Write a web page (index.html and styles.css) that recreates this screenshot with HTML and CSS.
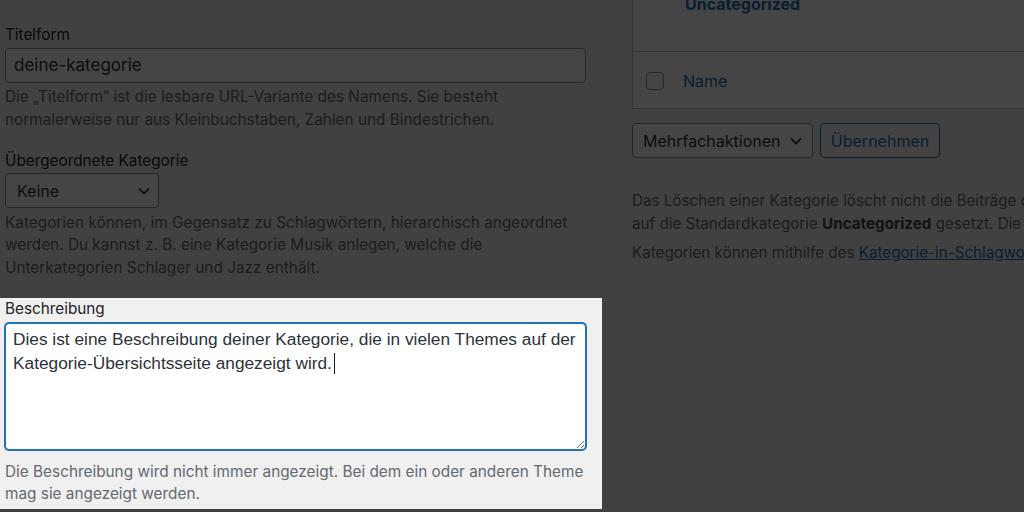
FILE: index.html
```html
<!DOCTYPE html>
<html lang="de">
<head>
<meta charset="utf-8">
<title>Kategorie bearbeiten</title>
<link rel="stylesheet" href="styles.css">
</head>
<body>
<div class="page">
  <div class="col-left">
    <div class="field field-top">
      <p class="desc">Der Name wird auf deiner Website immer so angezeigt.</p>
    </div>
    <div class="field">
      <label class="label">Titelform</label>
      <div class="input">deine-kategorie</div>
      <p class="desc">Die „Titelform“ ist die lesbare URL-Variante des Namens. Sie besteht<br>normalerweise nur aus Kleinbuchstaben, Zahlen und Bindestrichen.</p>
    </div>
    <div class="field">
      <label class="label">Übergeordnete Kategorie</label>
      <div class="select select-parent">
        <span>Keine</span>
        <svg class="chev" width="12" height="8" viewBox="0 0 12 8"><polyline points="1,1.5 6,6.5 11,1.5" fill="none" stroke="#1d2327" stroke-width="1.7"/></svg>
      </div>
      <p class="desc">Kategorien können, im Gegensatz zu Schlagwörtern, hierarchisch angeordnet<br>werden. Du kannst z. B. eine Kategorie Musik anlegen, welche die<br>Unterkategorien Schlager und Jazz enthält.</p>
    </div>
    <div class="field field-highlight">
      <label class="label">Beschreibung</label>
      <div class="textarea">Dies ist eine Beschreibung deiner Kategorie, die in vielen Themes auf der<br>Kategorie-Übersichtsseite angezeigt wird.<span class="caret"></span></div>
      <p class="desc desc-after-textarea">Die Beschreibung wird nicht immer angezeigt. Bei dem ein oder anderen Theme<br>mag sie angezeigt werden.</p>
    </div>
  </div>
  <div class="col-right">
    <div class="table">
      <div class="row row-cat"><a class="cat-link">Uncategorized</a></div>
      <div class="row row-foot"><span class="checkbox"></span><a class="col-name">Name</a></div>
    </div>
    <div class="bulk">
      <div class="select select-bulk">
        <span>Mehrfachaktionen</span>
        <svg class="chev" width="12" height="8" viewBox="0 0 12 8"><polyline points="1,1.5 6,6.5 11,1.5" fill="none" stroke="#1d2327" stroke-width="1.7"/></svg>
      </div>
      <div class="button">Übernehmen</div>
    </div>
    <div class="notes">
      <p>Das Löschen einer Kategorie löscht nicht die Beiträge dieser Kategorie. Stattdessen werden Beiträge, die nur der gelöschten Kategorie zugeordnet waren,<br>auf die Standardkategorie <strong>Uncategorized</strong> gesetzt. Die Standardkategorie kann nicht gelöscht werden.</p>
      <p class="note-2">Kategorien können mithilfe des <a class="link">Kategorie-in-Schlagwort-Konverters</a> selektiv in Schlagwörter umgewandelt werden.</p>
    </div>
  </div>
</div>
</body>
</html>
```
FILE: styles.css
```css
* { box-sizing: border-box; }
html, body { margin: 0; padding: 0; height: 100%; overflow: hidden; }
body {
  background: #f0f0f1;
  color: #3c434a;
  font-family: Inter, "Noto Sans", "Liberation Sans", sans-serif;
  font-size: 15px;
}
.page {
  display: flex;
  gap: 30px;
  margin-top: -17px;
  width: 1700px;
}
.col-left { width: 602px; flex: none; display: flex; flex-direction: column; gap: 18.5px; }
.col-right { width: 1060px; flex: none; }

.field { padding: 0 16px 0 5px; }
.field-top { margin-top: -2px; margin-bottom: 2px; }
.label {
  display: block;
  font-size: 15.3px;
  line-height: 22px;
  color: #1d2327;
}
.desc {
  margin: 3.5px 0 0;
  font-size: 15.35px;
  line-height: 22.5px;
  color: #646970;
  white-space: nowrap;
}
.field-top .desc { margin-top: 0; }

.input {
  margin-top: 1.5px;
  height: 35px;
  border: 1px solid #8c8f94;
  border-radius: 4px;
  background: #fff;
  padding: 0 8px;
  display: flex;
  align-items: center;
  font-size: 17px;
  color: #2c3338;
}
.select {
  margin-top: 1.5px;
  height: 35px;
  border: 1px solid #8c8f94;
  border-radius: 4px;
  background: #fff;
  display: flex;
  align-items: center;
  justify-content: space-between;
  font-size: 16px;
  color: #2c3338;
}
.select-parent { width: 154px; padding: 0 8px 0 11px; }
.chev { display: block; }

.field-highlight {
  position: relative;
  z-index: 2;
  background: #f0f0f1;
  padding-bottom: 3px;
  box-shadow: 0 0 0 3000px rgba(0, 0, 0, 0.73);
}
.textarea {
  margin-top: 3px;
  height: 127px;
  border: 1px solid #2271b1;
  box-shadow: 0 0 0 1px #2271b1;
  border-radius: 4px;
  background: #fff;
  padding: 3px 7px;
  font-family: "Liberation Sans", Arial, sans-serif;
  font-size: 17.3px;
  line-height: 24px;
  color: #2c3338;
  white-space: nowrap;
  overflow: hidden;
  resize: vertical;
}
.caret {
  display: inline-block;
  width: 0;
  height: 21px;
  border-left: 1.5px solid #1d2327;
  vertical-align: -5px;
  margin-left: 2px;
}
.desc-after-textarea { margin-top: 11px; }

/* right column */
.table {
  border: 1px solid #c3c4c7;
  background: #fff;
}
.row { display: flex; align-items: center; }
.row-cat {
  height: 68px;
  align-items: flex-start;
  padding: 9px 0 0 52px;
  border-bottom: 1px solid #c3c4c7;
}
.cat-link {
  font-size: 16px;
  line-height: 22px;
  font-weight: 700;
  color: #2271b1;
}
.row-foot { height: 56px; padding: 2px 0 0 13px; }
.checkbox {
  width: 18px;
  height: 18px;
  border: 1px solid #8c8f94;
  border-radius: 4px;
  background: #fff;
  flex: none;
}
.col-name {
  margin-left: 19px;
  font-size: 16px;
  color: #2271b1;
}
.bulk {
  display: flex;
  gap: 7px;
  margin-top: 14px;
}
.select-bulk { margin-top: 0; width: 181px; padding: 0 10px 0 10px; }
.button {
  height: 35px;
  width: 120px;
  border: 1px solid #2271b1;
  border-radius: 4px;
  background: #f6f7f7;
  color: #2271b1;
  font-size: 16px;
  display: flex;
  align-items: center;
  justify-content: center;
}
.notes { margin-top: 32px; }
.notes p {
  margin: 0;
  font-size: 15.2px;
  line-height: 22.5px;
  color: #646970;
  white-space: nowrap;
}
.notes strong { font-weight: 700; color: #3c434a; }
.notes .note-2 { margin-top: 7px; }
.link { color: #2271b1; text-decoration: underline; }
```
